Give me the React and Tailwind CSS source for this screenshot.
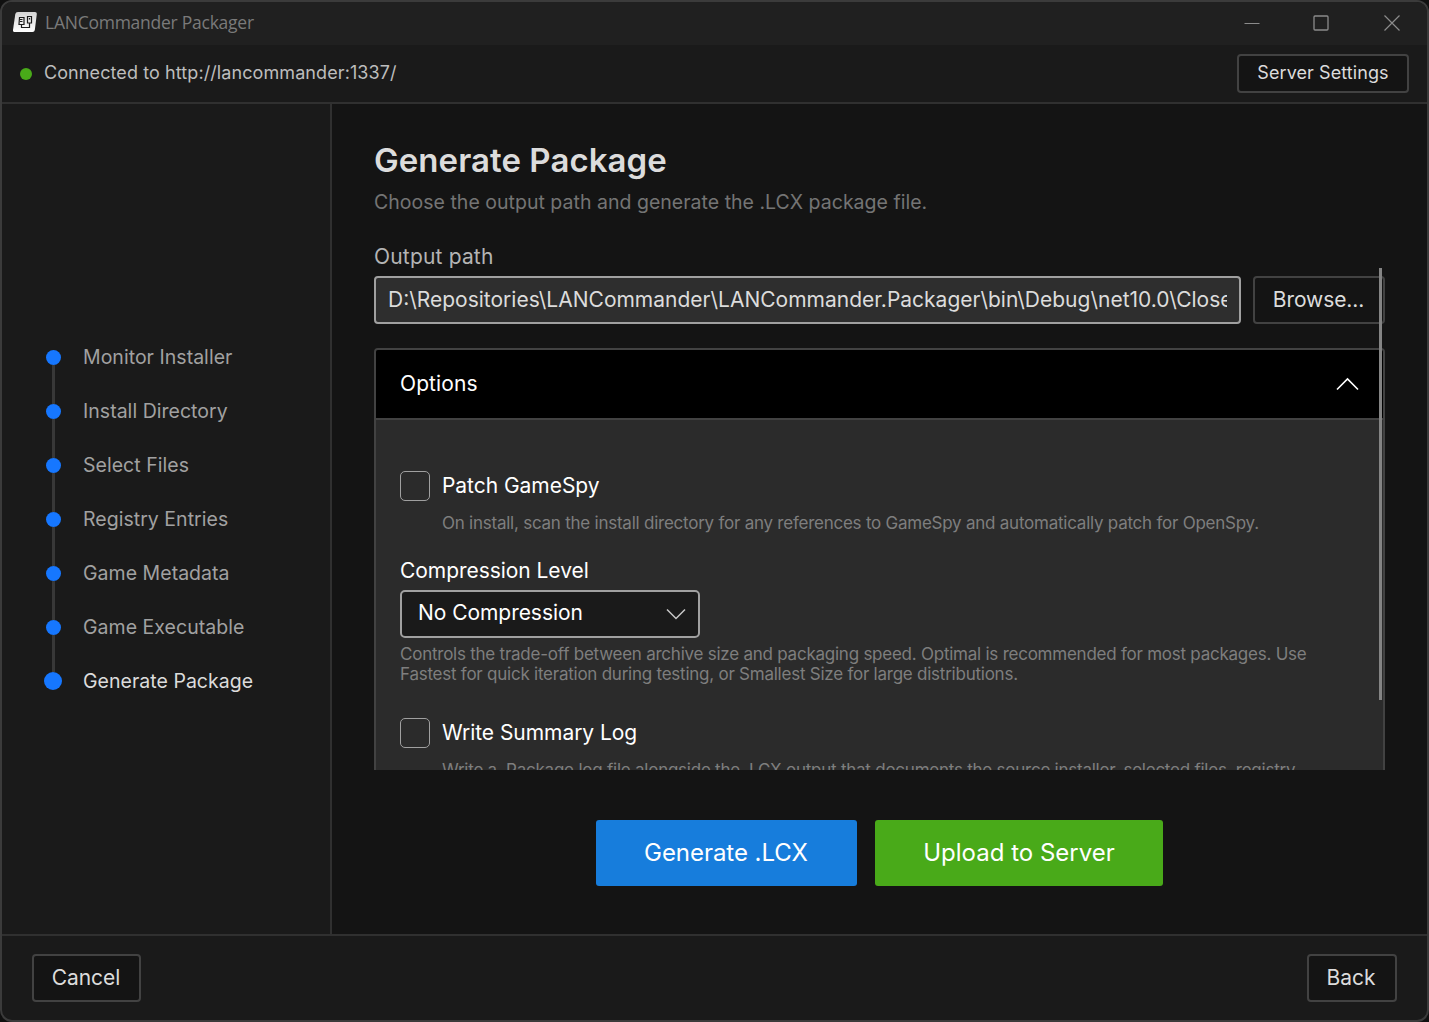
import clsx from "clsx";

const STEPS = [
  "Monitor Installer",
  "Install Directory",
  "Select Files",
  "Registry Entries",
  "Game Metadata",
  "Game Executable",
  "Generate Package",
];

function Logo() {
  return (
    <svg className="mb-[3px]" width="24" height="20" viewBox="0 0 24 20" fill="none">
      <defs>
        <linearGradient id="logo-bg" x1="0" y1="0" x2="0" y2="1">
          <stop offset="0" stopColor="#d4d4d4" />
          <stop offset="1" stopColor="#ffffff" />
        </linearGradient>
      </defs>
      <path
        d="M5 0h17q2 0 1.8 2l-2 16q-.3 2-2.300 2H1.500q-1.700 0-1.500-2l2.300-16q.3-2 2.700-2z"
        fill="url(#logo-bg)"
      />
      <path
        d="M6.500 5.500h4.500v7H6zM14.500 4.500h4v6.500h-4zM8.500 12.500v3h8v-4.500M7 7.500h2.500M7 9.500h2.500M16.500 6v1.500"
        stroke="#1a1a1a"
        strokeWidth="1.200"
      />
    </svg>
  );
}

function TitleBar() {
  return (
    <div className="flex h-[43px] shrink-0 items-center bg-[#202020] pl-[11px]">
      <Logo />
      <span className="mb-[3px] ml-2 font-['Open_Sans',sans-serif] text-[17.5px] leading-6 tracking-[-0.25px] text-[#7a7a7a]">
        LANCommander Packager
      </span>
      <div className="mb-[2px] ml-auto flex items-center pr-[27px] text-[#8b8b8b]">
        <svg width="16" height="16" fill="none" stroke="currentColor">
          <path d="M0.500 8.500h15" />
        </svg>
        <svg className="ml-[53px]" width="16" height="16" fill="none" stroke="currentColor">
          <rect x="1" y="1" width="14" height="14" rx="1" strokeWidth="1.300" />
        </svg>
        <svg className="ml-[55px]" width="16" height="16" fill="none" stroke="currentColor">
          <path d="M.5.500l15 15M15.500.500l-15 15" strokeWidth="1.200" />
        </svg>
      </div>
    </div>
  );
}

function Button({ className, children }) {
  return (
    <button
      className={clsx(
        "shrink-0 rounded-[4px] border-2 border-[#424242] bg-[#141414] text-[#dcdcdc]",
        className,
      )}
    >
      {children}
    </button>
  );
}

function StepList() {
  return (
    <aside className="flex w-[330px] shrink-0 flex-col justify-center border-r-2 border-[#303030] pl-[42px]">
      {STEPS.map((step, i) => {
        const first = i === 0;
        const current = i === STEPS.length - 1;
        return (
          <div key={step} className="flex h-[54px] items-center">
            <div className="flex h-full w-[19px] flex-col items-center">
              <div className={clsx("w-[3px] flex-1", !first && "bg-[#383838]")} />
              <div
                className={clsx(
                  "shrink-0 rounded-full bg-[#1677ff]",
                  current ? "mr-px size-[18px]" : "size-[15px]",
                )}
              />
              <div className={clsx("w-[3px] flex-1", !current && "bg-[#383838]")} />
            </div>
            <span
              className={clsx(
                "ml-5 text-[19.5px] leading-6 tracking-[0.03px]",
                current ? "text-[#dcdcdc]" : "text-[#a1a1a1]",
              )}
            >
              {step}
            </span>
          </div>
        );
      })}
    </aside>
  );
}

function CheckOption({ label, hint }) {
  return (
    <div>
      <div className="flex h-[30px] items-center gap-3">
        <span className="size-[30px] shrink-0 rounded-[5px] border-[1.5px] border-[#a0a0a0]" />
        <span className="text-[21px] leading-6 tracking-[-0.04px] text-white">{label}</span>
      </div>
      <p className="mt-3 ml-[42px] text-[17px] leading-5 tracking-[-0.24px] text-[#7e7e7e]">
        {hint}
      </p>
    </div>
  );
}

function OptionsPanel() {
  return (
    <div className="mt-6 shrink-0 rounded-[4px] border-2 border-[#424242] bg-[#2b2b2b]">
      <div className="flex h-[70px] items-center justify-between rounded-t-[2px] border-b-2 border-[#424242] bg-black pr-[23px] pl-6">
        <span className="text-[21px] leading-6 tracking-[0.1px] text-white">Options</span>
        <svg width="24" height="14" fill="none" stroke="#fff" strokeWidth="1.600">
          <path d="M1 12.500L11.500 2 22 12.500" />
        </svg>
      </div>
      <div className="px-6 pt-[51px] pb-6">
        <CheckOption
          label="Patch GameSpy"
          hint="On install, scan the install directory for any references to GameSpy and automatically patch for OpenSpy."
        />
        <p className="mt-[26px] text-[21px] leading-6 tracking-[-0.05px] text-white">
          Compression Level
        </p>
        <div className="mt-[7px] flex h-12 w-[300px] items-center justify-between rounded-[5px] border-2 border-[#a0a0a0] bg-[#1a1a1a] pr-3 pl-4">
          <span className="mb-0.5 text-[21px] leading-6 tracking-[-0.05px] text-white">
            No Compression
          </span>
          <svg width="20" height="12" fill="none" stroke="#c8c8c8" strokeWidth="1.500">
            <path d="M1 1.500l9 9 9-9" />
          </svg>
        </div>
        <p className="mt-1.5 mb-[34px] w-[940px] text-[17px] leading-5 tracking-[-0.24px] text-[#7e7e7e]">
          Controls the trade-off between archive size and packaging speed. Optimal is
          recommended for most packages. Use Fastest for quick iteration during testing, or
          Smallest Size for large distributions.
        </p>
        <CheckOption
          label="Write Summary Log"
          hint="Write a .Package.log file alongside the .LCX output that documents the source installer, selected files, registry"
        />
      </div>
    </div>
  );
}

export default function App() {
  return (
    <div className="h-[1022px] w-[1429px] bg-[#101010] font-['Inter',sans-serif]">
      <div className="flex h-full flex-col overflow-hidden rounded-xl border-2 border-[#3b3b3b] bg-[#1a1a1a]">
        <TitleBar />

        {/* Connection bar */}
        <header className="flex h-[59px] shrink-0 items-center border-b-2 border-[#303030] pr-[18px] pl-[18px]">
          <span className="size-3 rounded-full bg-[#49aa19]" />
          <span className="mb-0.5 ml-3 text-[18px] leading-6 tracking-[0.09px] text-[#bdbdbd]">
            Connected to http://lancommander:1337/
          </span>
          <Button className="ml-auto h-[39px] w-[172px] pb-0.5 text-[18px] tracking-[0.08px]">
            Server Settings
          </Button>
        </header>

        <div className="flex min-h-0 flex-1">
          <StepList />

          <main className="flex min-w-0 flex-1 flex-col bg-[#141414] px-[42px]">
            <h1 className="mt-9 text-[33px] leading-10 font-semibold tracking-[0.06px] text-[#dcdcdc]">
              Generate Package
            </h1>
            <p className="mt-[10px] text-[19.5px] leading-6 tracking-[0.02px] text-[#747474]">
              Choose the output path and generate the .LCX package file.
            </p>

            {/* Scrollable form */}
            <div className="relative mt-[31px] flex h-[525px] shrink-0 flex-col overflow-hidden">
              <label className="text-[21px] leading-6 tracking-[0.18px] text-[#b4b4b4]">
                Output path
              </label>
              <div className="mt-[7px] flex gap-3">
                <div className="h-12 min-w-0 flex-1 rounded-[4px] border-2 border-[#a0a0a0] bg-[#2e2e2e] px-3">
                  <div className="overflow-hidden text-[21px] leading-11 whitespace-nowrap text-[#dcdcdc]">
                    D:\Repositories\LANCommander\LANCommander.Packager\bin\Debug\net10.0\Close
                  </div>
                </div>
                <Button className="h-12 w-[132px] pr-px text-[21px] tracking-[-0.1px]">
                  Browse...
                </Button>
              </div>
              <OptionsPanel />
              <div className="absolute top-[23px] right-[3px] h-[432px] w-[3px] bg-[#848484]" />
            </div>

            <div className="mt-[50px] flex justify-center gap-[18px] text-2xl text-white">
              <button className="h-[66px] w-[261px] rounded-[3px] bg-[#177ddc] pr-px tracking-[-0.05px]">
                Generate .LCX
              </button>
              <button className="h-[66px] w-[288px] rounded-[3px] bg-[#49aa19]">
                Upload to Server
              </button>
            </div>
          </main>
        </div>

        <footer className="flex h-[86px] shrink-0 items-center justify-between border-t-2 border-[#303030] px-[30px]">
          <Button className="h-12 w-[109px] pr-px text-[21px] tracking-[-0.08px]">Cancel</Button>
          <Button className="h-12 w-[90px] pr-0.5 text-[21px]">Back</Button>
        </footer>
      </div>
    </div>
  );
}
